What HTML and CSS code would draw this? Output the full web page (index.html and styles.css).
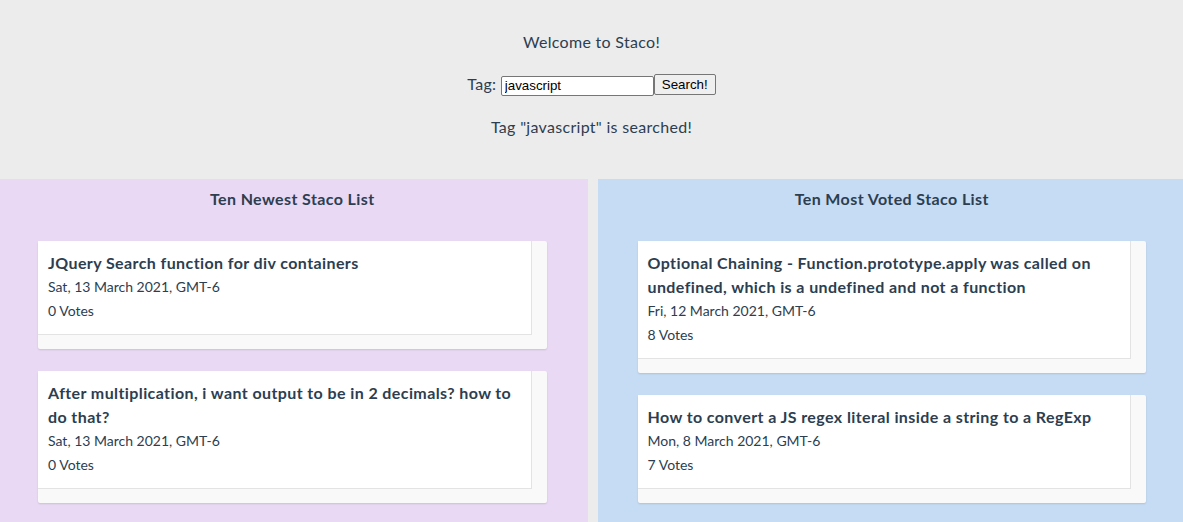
FILE: index.html
```html
<!DOCTYPE html>
<html>
<head>
<meta charset="utf-8">
<link rel="stylesheet" href="styles.css">
</head>
<body>
<header class="top">
  <p class="line">Welcome to Staco!</p>
  <form class="line search">
    <label>Tag: <input class="tag-input" type="text" value="javascript"></label><button class="btn" type="button">Search!</button>
  </form>
  <p class="line">Tag "javascript" is searched!</p>
</header>
<main class="lists">
  <section class="panel newest">
    <h2 class="panel-title">Ten Newest Staco List</h2>
    <div class="card">
      <div class="card-body">
        <div class="card-title">JQuery Search function for div containers</div>
        <div class="card-meta">Sat, 13 March 2021, GMT-6</div>
        <div class="card-meta">0 Votes</div>
      </div>
    </div>
    <div class="card">
      <div class="card-body">
        <div class="card-title">After multiplication, i want output to be in 2 decimals? how to do that?</div>
        <div class="card-meta">Sat, 13 March 2021, GMT-6</div>
        <div class="card-meta">0 Votes</div>
      </div>
    </div>
  </section>
  <section class="panel voted">
    <h2 class="panel-title">Ten Most Voted Staco List</h2>
    <div class="card">
      <div class="card-body">
        <div class="card-title">Optional Chaining - Function.prototype.apply was called on undefined, which is a undefined and not a function</div>
        <div class="card-meta">Fri, 12 March 2021, GMT-6</div>
        <div class="card-meta">8 Votes</div>
      </div>
    </div>
    <div class="card">
      <div class="card-body">
        <div class="card-title">How to convert a JS regex literal inside a string to a RegExp</div>
        <div class="card-meta">Mon, 8 March 2021, GMT-6</div>
        <div class="card-meta">7 Votes</div>
      </div>
    </div>
  </section>
</main>
</body>
</html>
```
FILE: styles.css
```css
html, body {
  margin: 0;
  padding: 0;
}
body {
  font-family: Lato, "Noto Sans", sans-serif;
  color: #2c3e50;
  background: #ececec;
  font-size: 16px;
  line-height: 24px;
}
.top {
  text-align: center;
  padding: 30px 0 40px;
  letter-spacing: 0.3px;
}
.line {
  margin: 0;
  height: 24px;
}
.search {
  margin: 18px 0 19px;
  display: flex;
  justify-content: center;
  align-items: center;
}
.tag-input {
  font-family: "Liberation Sans", Arial, sans-serif;
  font-size: 13.33px;
  letter-spacing: 0;
  width: 153px;
  height: 20px;
  box-sizing: border-box;
  border: 1px solid #767676;
  border-radius: 2px;
  padding: 1px 3px;
  margin: 0;
  color: #000;
  background: #fff;
  vertical-align: middle;
}
.btn {
  font-family: "Liberation Sans", Arial, sans-serif;
  font-size: 13.33px;
  letter-spacing: 0;
  height: 21px;
  box-sizing: border-box;
  padding: 0 7px;
  border: 1px solid #767676;
  border-radius: 2px;
  background: #efefef;
  color: #000;
  margin: 0;
  line-height: 17px;
}
.lists {
  display: flex;
  gap: 10px;
}
.panel {
  flex: 1;
  padding-top: 8px;
  padding-bottom: 40px;
  min-height: 400px;
}
.newest {
  background: #e9d9f4;
  padding-left: 38px;
  padding-right: 41px;
}
.voted {
  background: #c6dcf4;
  padding-left: 40px;
  padding-right: 37px;
}
.panel-title {
  margin: 0 0 30px;
  font-size: 16px;
  font-weight: 700;
  text-align: center;
  line-height: 24px;
  letter-spacing: 0.4px;
}
.card {
  background: #f9f9f9;
  padding: 0 15px 14px 0;
  margin-bottom: 22px;
  border-radius: 2px;
  box-shadow: 0 1px 2px rgba(0, 0, 0, 0.12);
}
.card-body {
  background: #fff;
  padding: 10px 10px 11px;
  border-right: 1px solid #e3e3e3;
  border-bottom: 1px solid #e3e3e3;
}
.card-title {
  font-weight: 700;
  font-size: 16px;
  line-height: 24px;
  letter-spacing: 0.4px;
}
.card-meta {
  font-size: 14px;
  line-height: 24px;
}
```
